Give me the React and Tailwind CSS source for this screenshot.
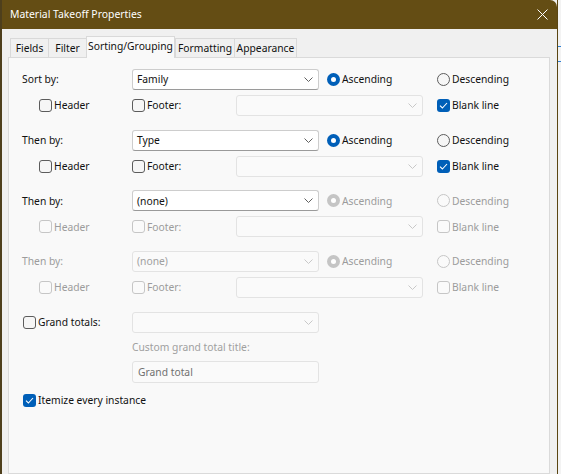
import React from "react";

const Checkbox = ({ checked = false, disabled = false }) => {
  if (checked) {
    return (
      <span className="w-[13px] h-[13px] rounded-[3px] bg-[#005fb8] flex items-center justify-center shrink-0">
        <svg width="9" height="7" viewBox="0 0 9 7">
          <polyline points="1,3.6 3.4,6 8,1" fill="none" stroke="#ffffff" strokeWidth="1.1" />
        </svg>
      </span>
    );
  }
  return (
    <span
      className={`w-[13px] h-[13px] rounded-[3px] border shrink-0 ${
        disabled ? "border-[#c6c6c6] bg-[#fafafa]" : "border-[#5c5c5c] bg-[#f6f6f6]"
      }`}
    ></span>
  );
};

const Radio = ({ checked = false, disabled = false }) => {
  if (checked) {
    return (
      <span
        className={`w-[13px] h-[13px] rounded-full flex items-center justify-center shrink-0 ${
          disabled ? "bg-[#c5c5c5]" : "bg-[#005fb8]"
        }`}
      >
        <span className="w-[5px] h-[5px] rounded-full bg-white"></span>
      </span>
    );
  }
  return (
    <span
      className={`w-[13px] h-[13px] rounded-full border shrink-0 ${
        disabled ? "border-[#c6c6c6] bg-[#fafafa]" : "border-[#5c5c5c] bg-[#f6f6f6]"
      }`}
    ></span>
  );
};

const Chevron = ({ color }) => (
  <svg width="9" height="5" viewBox="0 0 9 5" className="shrink-0">
    <polyline points="0.5,0.5 4.5,4.5 8.5,0.5" fill="none" stroke={color} strokeWidth="1" />
  </svg>
);

const Select = ({ value = "", disabled = false }) => (
  <div
    className={`w-[187px] h-[21px] rounded-[3px] border flex items-center justify-between pl-[4px] pr-[5px] shrink-0 ${
      disabled
        ? "border-[#e3e3e3] bg-[#fafafa] text-[#a0a0a0]"
        : "border-[#cdcdcd] border-b-[#9a9a9a] bg-white text-[#111111]"
    }`}
  >
    <span>{value}</span>
    <Chevron color={disabled ? "#c8c8c8" : "#606060"} />
  </div>
);

const Choice = ({ control, label, disabled, className = "" }) => (
  <div className={`flex items-center gap-[2px] ${className}`}>
    {control}
    <span className={disabled ? "text-[#9c9c9c]" : "text-[#111111]"}>{label}</span>
  </div>
);

const SortGroup = ({ label, value, selectDisabled, rowDisabled, labelDisabled, blank }) => (
  <div className="flex flex-col">
    <div className="flex items-center h-[21px]">
      <span className={`w-[110px] ${labelDisabled ? "text-[#9c9c9c]" : "text-[#111111]"}`}>{label}</span>
      <Select value={value} disabled={selectDisabled} />
      <Choice
        className="ml-[8px] w-[110px]"
        control={<Radio checked disabled={rowDisabled} />}
        label="Ascending"
        disabled={rowDisabled}
      />
      <Choice control={<Radio disabled={rowDisabled} />} label="Descending" disabled={rowDisabled} />
    </div>
    <div className="flex items-center h-[21px] mt-[5px] pl-[17px]">
      <Choice className="w-[93px]" control={<Checkbox disabled={rowDisabled} />} label="Header" disabled={rowDisabled} />
      <Choice className="w-[104px]" control={<Checkbox disabled={rowDisabled} />} label="Footer:" disabled={rowDisabled} />
      <Select disabled />
      <Choice
        className="ml-[14px]"
        control={<Checkbox checked={blank} disabled={rowDisabled} />}
        label="Blank line"
        disabled={rowDisabled}
      />
    </div>
  </div>
);

const tabs = [
  { name: "Fields", w: "w-[38px]" },
  { name: "Filter", w: "w-[38px]" },
  { name: "Sorting/Grouping", w: "w-[89px]", active: true },
  { name: "Formatting", w: "w-[59px]" },
  { name: "Appearance", w: "w-[63px]" },
];

export default function App() {
  return (
    <div className="w-[561px] h-[474px] flex bg-[#f3f3f3] overflow-hidden font-['Noto_Sans','Open_Sans',sans-serif] text-[10.3px] leading-none">
      {/* window edge behind */}
      <div className="w-[2px] bg-[#4e3f1c]"></div>

      {/* Dialog */}
      <div className="w-[556px] flex flex-col bg-[#f0f0f0] border-r border-[#5a4512]">
        {/* Title bar */}
        <div className="h-[29px] bg-[#644d14] rounded-tr-[7px] flex items-center justify-between pl-[8px] pr-[9px] shrink-0">
          <span className="text-white text-[10.4px]">Material Takeoff Properties</span>
          <svg width="11" height="11" viewBox="0 0 11 11">
            <path d="M0.5 0.5 L10.5 10.5 M10.5 0.5 L0.5 10.5" stroke="#ffffff" strokeWidth="1" />
          </svg>
        </div>

        <div className="flex-1 flex flex-col pl-[6px] pr-[7px]">
          {/* Tabs */}
          <div className="h-[28px] flex items-end pl-[2px] shrink-0">
            {tabs.map((t) =>
              t.active ? (
                <div
                  key={t.name}
                  className={`${t.w} h-[22px] -mb-[1px] relative z-10 bg-[#f9f9f9] border border-b-0 border-[#d9d9d9] flex items-center justify-center pb-[3px] text-[#111111]`}
                >
                  {t.name}
                </div>
              ) : (
                <div
                  key={t.name}
                  className={`${t.w} h-[19px] bg-[#f0f0f0] border border-b-0 border-r-0 last:border-r border-[#d9d9d9] flex items-center justify-center text-[#111111]`}
                >
                  {t.name}
                </div>
              )
            )}
          </div>

          {/* Panel */}
          <div className="flex-1 bg-[#f9f9f9] border border-[#dadada] pt-[11px] pl-[13px] flex flex-col">
            <div className="flex flex-col gap-[13.6px]">
              <SortGroup label="Sort by:" value="Family" blank />
              <SortGroup label="Then by:" value="Type" blank />
              <SortGroup label="Then by:" value="(none)" rowDisabled />
              <SortGroup label="Then by:" value="(none)" selectDisabled rowDisabled labelDisabled />
            </div>

            {/* Grand totals */}
            <div className="flex items-center h-[21px] mt-[14px]">
              <div className="w-[110px] pl-[1px]">
                <Choice control={<Checkbox />} label="Grand totals:" />
              </div>
              <Select disabled />
            </div>
            <div className="ml-[110px] mt-[8px] h-[12px] flex items-center text-[#a0a0a0]">
              Custom grand total title:
            </div>
            <div className="ml-[110px] mt-[8px] w-[187px] h-[22px] rounded-[3px] border border-[#e3e3e3] bg-[#fafafa] flex items-center pl-[5px] text-[#707070]">
              Grand total
            </div>

            <div className="mt-[11px] pl-[1px] h-[13px] flex items-center">
              <Choice control={<Checkbox checked />} label="Itemize every instance" />
            </div>
          </div>
        </div>
      </div>

      {/* background beyond the dialog */}
      <div className="flex-1 flex flex-col">
        <div className="h-[46px]"></div>
        <div className="h-[1px] bg-[#2f7fd4]"></div>
        <div className="h-[14px]"></div>
        <div className="h-[1px] bg-[#2f7fd4]"></div>
      </div>
    </div>
  );
}
